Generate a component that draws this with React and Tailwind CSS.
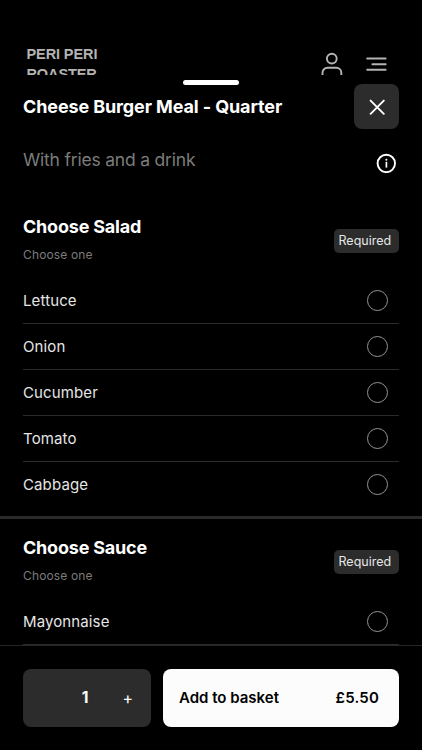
import React, { useState } from 'react';

const groups = [
  { title: 'Choose Salad', options: ['Lettuce', 'Onion', 'Cucumber', 'Tomato', 'Cabbage'] },
  { title: 'Choose Sauce', options: ['Mayonnaise'] }
];

const UserIcon = () => (
  <svg width="22" height="24" viewBox="0 0 22 24" fill="none" stroke="#b4b4b4" strokeWidth="1.9">
    <circle cx="10.8" cy="6.6" r="4.9" />
    <path d="M1.5 23v-2.2a5 5 0 0 1 5-5h8.8a5 5 0 0 1 5 5V23" />
  </svg>
);

const MenuIcon = () => (
  <svg width="22" height="16" viewBox="0 0 22 16" fill="none" stroke="#b4b4b4" strokeWidth="2" strokeLinecap="round">
    <path d="M1.2 2.6h18.4M6.4 8.3h13.2M1.2 13.8h18.4" />
  </svg>
);

const CloseIcon = () => (
  <svg width="16" height="16" viewBox="0 0 16 16" fill="none" stroke="#fff" strokeWidth="1.9" strokeLinecap="round">
    <path d="M1.6 1.6l13.2 13.2M14.8 1.6L1.6 14.8" />
  </svg>
);

const InfoIcon = () => (
  <svg width="20" height="20" viewBox="0 0 20 20" fill="none" stroke="#fff">
    <circle cx="10.3" cy="10.4" r="8.7" strokeWidth="1.9" />
    <path d="M10.4 8.8v5.8" strokeWidth="1.7" />
    <circle cx="10.4" cy="6.8" r="1" fill="#fff" stroke="none" />
  </svg>
);

const Option = ({ label, last, checked, onSelect }) => (
  <button
    onClick={onSelect}
    className={`flex h-[46px] w-full items-center justify-between border-b pr-[11px] text-left ${last ? 'border-transparent' : 'border-[#2b2b2b]'}`}
  >
    <span className="text-[15px] leading-5 tracking-[0.12px] text-[#e6e6e6]">{label}</span>
    <span className="flex h-[21px] w-[21px] items-center justify-center rounded-full border border-[#959595]">
      {checked && <span className="h-[11px] w-[11px] rounded-full bg-white" />}
    </span>
  </button>
);

const OptionGroup = ({ title, options, underlined }) => {
  const [selected, setSelected] = useState(null);

  return (
    <section>
      <div className="flex h-[63px] items-start justify-between">
        <div>
          <h2 className="text-[18px] font-bold leading-6 tracking-[-0.2px] text-white">{title}</h2>
          <p className="mt-[8px] text-[12px] leading-4 tracking-[0.15px] text-[#7c7c7c]">Choose one</p>
        </div>
        <span className="mt-[14px] flex h-6 w-[65px] items-center rounded-[5px] bg-[#2c2c2c] pl-[4.5px] pt-px text-[12.5px] text-[#e6e6e6]">
          Required
        </span>
      </div>
      {options.map((o, i) => (
        <Option
          key={o}
          label={o}
          last={!underlined && i === options.length - 1}
          checked={selected === o}
          onSelect={() => setSelected(o)}
        />
      ))}
    </section>
  );
};

export default function App() {
  const [count, setCount] = useState(1);

  return (
    <div className="flex h-[750px] w-[422px] flex-col overflow-hidden bg-black font-['Inter',sans-serif]">
      <header className="flex h-[75px] shrink-0 items-start justify-between overflow-hidden pl-[26.5px] pr-[34px]">
        <div className="w-24 pt-[44px] font-['Liberation_Sans',sans-serif] text-[14.5px] font-bold leading-5 tracking-[-0.1px] text-[#b4b4b4]">
          PERI PERI ROASTER
        </div>
        <div className="flex items-start gap-[23px] pt-[52px]">
          <UserIcon />
          <div className="pt-[4px]">
            <MenuIcon />
          </div>
        </div>
      </header>

      <main className="flex-1 overflow-hidden">
        <div className="mx-auto mt-[5px] h-[5px] w-14 rounded-full bg-white" />
        <div className="-mt-px flex h-[45px] items-center justify-between pl-[23px] pr-[23px]">
          <h1 className="text-[18px] font-bold leading-6 tracking-[-0.12px] text-white">Cheese Burger Meal - Quarter</h1>
          <button className="flex h-[45px] w-[45px] items-center justify-center rounded-lg bg-[#2c2c2c]">
            <CloseIcon />
          </button>
        </div>
        <div className="mt-[19px] flex h-[67px] items-start justify-between pl-[23px] pr-[26px]">
          <p className="text-[17.5px] leading-6 tracking-[-0.2px] text-[#7c7c7c]">With fries and a drink</p>
          <div className="pt-[5px]">
            <InfoIcon />
          </div>
        </div>
        <div className="px-[23px]">
          <OptionGroup title={groups[0].title} options={groups[0].options} />
        </div>
        <div className="mt-[8px] mb-[17px] h-[3px] bg-[#2a2a2a]" />
        <div className="px-[23px]">
          <OptionGroup title={groups[1].title} options={groups[1].options} underlined />
        </div>
      </main>

      <footer className="flex h-[105px] shrink-0 items-start gap-3 border-t border-[#262626] px-[23px] pt-[23px]">
        <div className="flex h-[58px] w-[128px] items-center justify-end rounded-lg bg-[#2c2c2c] pr-[18px]">
          <span className="text-[15.5px] font-bold text-white">{count}</span>
          <button className="ml-[34px] text-[16px] text-white" onClick={() => setCount(count + 1)}>
            +
          </button>
        </div>
        <button className="flex h-[58px] flex-1 items-center justify-between rounded-lg bg-[#fcfcfc] pl-4 pr-5 pt-px text-[15px] font-semibold text-black">
          <span>Add to basket</span>
          <span className="tracking-[0.2px]">£5.50</span>
        </button>
      </footer>
    </div>
  );
}
